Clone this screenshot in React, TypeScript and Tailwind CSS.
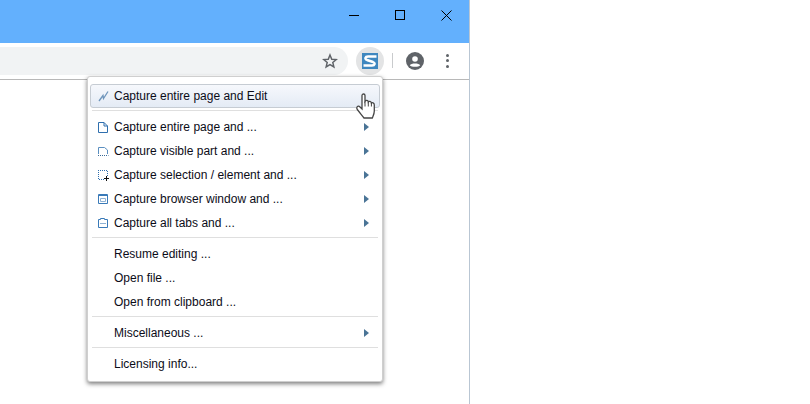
import React from 'react';

const Arrow = () => (
    <svg width="5" height="8" viewBox="0 0 5 8" className="absolute right-[11px] top-[8px]">
        <path d="M0 0 L5 4 L0 8 Z" fill="#4a7496" />
    </svg>
);

const PageIcon = () => (
    <svg width="12" height="12" viewBox="0 0 12 12" fill="none" stroke="#2f6fae">
        <path d="M1.5 1.5 H7 L10.5 5 V11.5 H1.5 Z M7 1.5 V5 H10.5" />
    </svg>
);

const VisibleIcon = () => (
    <svg width="12" height="12" viewBox="0 0 12 12" fill="none" stroke="#5b8fc0">
        <path d="M1.5 9 V2.5 H7.5 L10.5 5 V9" />
        <path d="M1 10.5 H11.5" strokeDasharray="1 1" stroke="#3a6a98" />
    </svg>
);

const SelectionIcon = () => (
    <svg width="12" height="12" viewBox="0 0 12 12" fill="none">
        <path d="M1.5 1 V10.5 H8 M1 1.5 H10.5 V7" stroke="#2f6fae" strokeDasharray="1 1" />
        <path d="M9.5 7 V12 M7 9.5 H12" stroke="#111" />
    </svg>
);

const WindowIcon = () => (
    <svg width="12" height="12" viewBox="0 0 12 12" fill="none" stroke="#3a7ab8">
        <path d="M1.5 1.5 H10.5 V10.5 H1.5 Z" />
        <path d="M1.5 2.5 H10.5" />
        <path d="M3.5 5.5 H8.5 V8.5 H3.5 Z" stroke="#8fb2d4" />
    </svg>
);

const TabsIcon = () => (
    <svg width="12" height="12" viewBox="0 0 12 12" fill="none" stroke="#3a7ab8">
        <path d="M1.5 10.5 V2.5 H3.5 V1.5 H7.5 V2.5 H10.5 V10.5 Z" />
        <path d="M3 6.5 H9" stroke="#8fb2d4" />
    </svg>
);

const EditIcon = () => (
    <svg width="12" height="12" viewBox="0 0 12 12" fill="none">
        <path d="M2 11 L6 5.5 L6.5 8.5 L11 1.5" stroke="#6f95bb" strokeWidth="1.3" />
    </svg>
);

const MenuRow = ({ icon, label, arrow }: { icon?: React.ReactNode; label: string; arrow?: boolean }) => (
    <div className="relative flex h-6 items-center">
        <div className="w-6 shrink-0 pl-[7px]">{icon}</div>
        <span>{label}</span>
        {arrow && <Arrow />}
    </div>
);

const Sep = () => <div className="mx-[2px] mt-[2px] mb-[4px] h-px bg-[#dfdfdf]" />;

const HandCursor = () => (
    <svg width="21" height="27" viewBox="0 0 21 27" className="absolute left-[355px] top-[93px]">
        <path
            d="M7 2.5 C7 .5 10 .5 10 2.5 V8.5 C11 7 13 7 13.3 9 C14 8 16 8 16.4 10 C17 9.2 19.3 9.6 19.3 12 V18 C19.3 21 18 23 17.3 25 H9 C7.5 23 5 20 2.3 16.5 C.8 14.5 2.8 11.8 5 14 L7 16 Z"
            fill="#fff"
            stroke="#454545"
            strokeWidth="1.3"
        />
        <path d="M10 8.5 V13.5 M13.3 9 V13.5 M16.4 10 V13.5" stroke="#454545" strokeWidth="1" />
    </svg>
);

const App = () => {
    return (
        <div className="relative h-[404px] w-[810px] overflow-hidden bg-white font-['Liberation_Sans',sans-serif]">
            <div className="h-full w-[470px] border-r border-[#b9c6d3]">
                <div className="flex h-[43px] items-start justify-end bg-[#63b0fd]">
                    <div className="flex h-[30px] w-[46px] items-center justify-center">
                        <div className="h-px w-[10px] bg-black" />
                    </div>
                    <div className="flex h-[30px] w-[46px] items-center justify-center">
                        <div className="h-[10px] w-[10px] border border-black" />
                    </div>
                    <div className="flex h-[30px] w-[46px] items-center justify-center">
                        <svg width="11" height="11" viewBox="0 0 11 11" stroke="#000" strokeWidth="1">
                            <path d="M.5 .5 L10.5 10.5 M10.5 .5 L.5 10.5" />
                        </svg>
                    </div>
                </div>
                <div className="flex h-[37px] items-center border-b border-[#b8b8b8] pb-[1px]">
                    <div className="flex h-[28px] w-[348px] items-center justify-end rounded-r-[14px] bg-[#f1f3f4] pr-[10px]">
                        <svg width="16" height="16" viewBox="0 0 24 24" fill="none" stroke="#5f6368" strokeWidth="2.2">
                            <path d="M12 3 L14.6 9.3 L21.4 9.8 L16.2 14.2 L17.8 20.9 L12 17.3 L6.2 20.9 L7.8 14.2 L2.6 9.8 L9.4 9.3 Z" />
                        </svg>
                    </div>
                    <div className="ml-[8px] flex h-[28px] w-[28px] items-center justify-center rounded-full bg-[#e3e4e5]">
                        <svg width="16" height="16" viewBox="0 0 16 16">
                            <rect width="16" height="16" fill="#3f87bf" />
                            <path d="M14.5 3.5 H6 C3 3.5 2.5 6 5 7 L11 9 C13.5 10 13 12.5 10 12.5 H1.5" fill="none" stroke="#fff" strokeWidth="2.4" />
                        </svg>
                    </div>
                    <div className="ml-[8px] h-[15px] w-px bg-[#c9cbcd]" />
                    <svg width="18" height="18" viewBox="0 0 18 18" className="ml-[13px]">
                        <circle cx="9" cy="9" r="9" fill="#5f6368" />
                        <circle cx="9" cy="7" r="2.8" fill="#fff" />
                        <path d="M3.8 13.2 C5 10.8 13 10.8 14.2 13.2 C12.5 15.4 5.5 15.4 3.8 13.2 Z" fill="#fff" />
                    </svg>
                    <div className="ml-[22px] flex flex-col gap-[2.5px]">
                        <div className="h-[3px] w-[3px] rounded-full bg-[#5f6368]" />
                        <div className="h-[3px] w-[3px] rounded-full bg-[#5f6368]" />
                        <div className="h-[3px] w-[3px] rounded-full bg-[#5f6368]" />
                    </div>
                </div>
            </div>

            {/* popup menu */}
            <div className="absolute left-[87px] top-[76px] h-[306px] w-[296px] rounded-[3px] border border-[#cfcfcf] bg-white px-[2px] pt-[7px] text-[12px] leading-none text-[#0c0c18] shadow-[0_2px_4px_rgba(0,0,0,0.5)]">
                <div className="flex h-6 items-center rounded-[3px] border border-[#c6ccd3] bg-gradient-to-b from-[#f6f8fc] to-[#e4ebf5]">
                    <div className="w-[23px] shrink-0 pl-[6px]"><EditIcon /></div>
                    <span>Capture entire page and Edit</span>
                </div>
                <Sep />
                <MenuRow icon={<PageIcon />} label="Capture entire page and ..." arrow />
                <MenuRow icon={<VisibleIcon />} label="Capture visible part and ..." arrow />
                <MenuRow icon={<SelectionIcon />} label="Capture selection / element and ..." arrow />
                <MenuRow icon={<WindowIcon />} label="Capture browser window and ..." arrow />
                <MenuRow icon={<TabsIcon />} label="Capture all tabs and ..." arrow />
                <Sep />
                <MenuRow label="Resume editing ..." />
                <MenuRow label="Open file ..." />
                <MenuRow label="Open from clipboard ..." />
                <Sep />
                <MenuRow label="Miscellaneous ..." arrow />
                <Sep />
                <MenuRow label="Licensing info..." />
            </div>
            <HandCursor />
        </div>
    );
};

export default App;
